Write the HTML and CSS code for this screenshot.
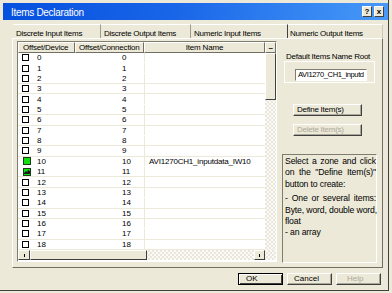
FILE: index.html
```html
<!DOCTYPE html>
<html>
<head>
<meta charset="utf-8">
<link rel="stylesheet" href="styles.css">
</head>
<body>
<div class="dialog">
  <div class="titlebar">
    <span class="title">Items Declaration</span>
    <div class="tbtns"><span class="tbtn">?</span><span class="tbtn">x</span></div>
  </div>
  <div class="tabs">
    <span class="tab t1">Discrete Input Items</span>
    <span class="tab t2">Discrete Output Items</span>
    <span class="tab t3">Numeric Input Items</span>
    <span class="tab t4 active">Numeric Output Items</span>
  </div>
  <div class="panel">
    <div class="grid">
      <div class="ghead">
        <div class="hc c1">Offset/Device</div>
        <div class="hc c2">Offset/Connection</div>
        <div class="hc c3">Item Name</div>
        <div class="hc up">–</div>
      </div>
      <div class="gbody">
        <div class="rows">
          <div class="row"><div class="cell d"><span class="cb"></span><span>0</span></div><div class="cell n">0</div><div class="cell nm"></div></div>
          <div class="row"><div class="cell d"><span class="cb"></span><span>1</span></div><div class="cell n">1</div><div class="cell nm"></div></div>
          <div class="row"><div class="cell d"><span class="cb"></span><span>2</span></div><div class="cell n">2</div><div class="cell nm"></div></div>
          <div class="row"><div class="cell d"><span class="cb"></span><span>3</span></div><div class="cell n">3</div><div class="cell nm"></div></div>
          <div class="row"><div class="cell d"><span class="cb"></span><span>4</span></div><div class="cell n">4</div><div class="cell nm"></div></div>
          <div class="row"><div class="cell d"><span class="cb"></span><span>5</span></div><div class="cell n">5</div><div class="cell nm"></div></div>
          <div class="row"><div class="cell d"><span class="cb"></span><span>6</span></div><div class="cell n">6</div><div class="cell nm"></div></div>
          <div class="row"><div class="cell d"><span class="cb"></span><span>7</span></div><div class="cell n">7</div><div class="cell nm"></div></div>
          <div class="row"><div class="cell d"><span class="cb"></span><span>8</span></div><div class="cell n">8</div><div class="cell nm"></div></div>
          <div class="row"><div class="cell d"><span class="cb"></span><span>9</span></div><div class="cell n">9</div><div class="cell nm"></div></div>
          <div class="row"><div class="cell d"><span class="cb green"></span><span>10</span></div><div class="cell n">10</div><div class="cell nm">AVI1270CH1_inputdata_IW10</div></div>
          <div class="row"><div class="cell d"><span class="cb green"><svg width="8" height="8" viewBox="0 0 8 8"><path d="M1 5 L3 3 L4 4 L5 2 L7 3 L7 6 L1 6 Z" fill="#1a1a1a"/></svg></span><span>11</span></div><div class="cell n">11</div><div class="cell nm"></div></div>
          <div class="row"><div class="cell d"><span class="cb"></span><span>12</span></div><div class="cell n">12</div><div class="cell nm"></div></div>
          <div class="row"><div class="cell d"><span class="cb"></span><span>13</span></div><div class="cell n">13</div><div class="cell nm"></div></div>
          <div class="row"><div class="cell d"><span class="cb"></span><span>14</span></div><div class="cell n">14</div><div class="cell nm"></div></div>
          <div class="row"><div class="cell d"><span class="cb"></span><span>15</span></div><div class="cell n">15</div><div class="cell nm"></div></div>
          <div class="row"><div class="cell d"><span class="cb"></span><span>16</span></div><div class="cell n">16</div><div class="cell nm"></div></div>
          <div class="row"><div class="cell d"><span class="cb"></span><span>17</span></div><div class="cell n">17</div><div class="cell nm"></div></div>
          <div class="row"><div class="cell d"><span class="cb"></span><span>18</span></div><div class="cell n">18</div><div class="cell nm"></div></div>
        </div>
        <div class="vscroll"><div class="vthumb"></div></div>
      </div>
      <div class="hscroll">
        <div class="sbtn lbtn"><span class="tick"></span></div>
        <div class="hthumb"></div>
        <div class="track"></div>
        <div class="sbtn rbtn"><span class="tick"></span></div>
        <div class="corner"></div>
      </div>
    </div>
    <div class="side">
      <div class="lbl">Default Items Name Root</div>
      <div class="frame">
        <div class="input">AVI1270_CH1_inputd</div>
      </div>
      <div class="btn define">Define Item(s)</div>
      <div class="btn delete">Delete Item(s)</div>
      <div class="info">
        <div class="jl">Select a zone and click</div>
        <div class="jl">on the "Define Item(s)"</div>
        <div class="ln">button to create:</div>
        <div class="jl gap">- One or several items:</div>
        <div class="jl">Byte, word, double word,</div>
        <div class="ln">float</div>
        <div class="ln">- an array</div>
      </div>
    </div>
  </div>
  <div class="footer">
    <div class="fbtn ok">OK</div>
    <div class="fbtn cancel">Cancel</div>
    <div class="fbtn help">Help</div>
  </div>
</div>
</body>
</html>
```

FILE: styles.css
```css
* { box-sizing: border-box; }
html, body { margin: 0; padding: 0; }
body {
  width: 392px;
  height: 293px;
  overflow: hidden;
  background: #ece9d8;
  font-family: "Liberation Sans", Arial, sans-serif;
  font-size: 8px;
  color: #000;
}
.dialog {
  width: 389px;
  height: 291px;
  border-right: 1px solid #404040;
  border-bottom: 1px solid #404040;
  padding: 3px 0 0 3px;
  display: flex;
  flex-direction: column;
}
.titlebar {
  height: 17px;
  flex: none;
  background: linear-gradient(to right, #0550de 0%, #1a66e8 45%, #3a8cf4 85%, #4a98f7 100%);
  display: flex;
  align-items: center;
  justify-content: space-between;
  padding: 0 4px 0 8px;
  color: #fff;
}
.title {
  font-size: 10px;
  letter-spacing: -0.3px;
  padding-top: 1px;
}
.tbtns { display: flex; gap: 2px; }
.tbtn {
  width: 10px;
  height: 11px;
  background: #ece9d8;
  border: 1px solid;
  border-color: #fff #404040 #404040 #fff;
  color: #000;
  font-size: 8px;
  line-height: 9px;
  text-align: center;
  font-weight: bold;
}
.tabs {
  display: flex;
  height: 14px;
  margin-top: 4px;
  padding-left: 10px;
  flex: none;
}
.tab {
  border-top: 1px solid #fff;
  padding: 4px 0 0 3px;
  line-height: 9px;
  letter-spacing: -0.25px;
  white-space: nowrap;
  border-right: 1px solid #9d9b8d;
}
.t1 { width: 88px; }
.t2 { width: 90px; }
.t3 { width: 96px; border-right: none; }
.t4 { width: 96px; border-left: 1px solid #404040; border-right: 1px solid #ccc9b8; padding-left: 2px; }
.panel {
  margin-left: 9px;
  width: 371px;
  height: 230px;
  flex: none;
  border: 1px solid;
  border-color: #fff #716f64 #716f64 #fff;
  display: flex;
  padding: 2px 0 0 4px;
}
.grid {
  width: 260px;
  height: 221px;
  border: 1px solid;
  border-color: #7f7d70 #fff #fff #7f7d70;
  display: flex;
  flex-direction: column;
  background: #fff;
}
.ghead {
  display: flex;
  height: 11px;
  flex: none;
  background: #ece9d8;
}
.hc {
  border: 1px solid;
  border-color: #fff #716f64 #716f64 #fff;
  line-height: 9px;
  white-space: nowrap;
  overflow: hidden;
  letter-spacing: -0.2px;
}
.hc.c1 { width: 57px; padding-left: 4px; }
.hc.c2 { width: 69px; padding-left: 3px; }
.hc.c3 { width: 121px; text-align: center; }
.hc.up { width: 11px; text-align: center; font-weight: bold; }
.gbody {
  display: flex;
  height: 197px;
  flex: none;
}
.rows {
  width: 247px;
  display: grid;
  grid-template-rows: repeat(19, 1fr);
}
.row {
  display: grid;
  grid-template-columns: 57px 69px 121px;
  border-bottom: 1px solid #ece9d8;
}
.row:nth-child(3n+2), .row:first-child { border-bottom-color: #fff; }
.cell {
  display: flex;
  align-items: center;
  white-space: nowrap;
  overflow: hidden;
}
.cell.d { padding-left: 4px; }
.cell.n { padding-left: 47px; }
.cell.nm { border-left: 1px solid #ece9d8; padding-left: 4px; letter-spacing: -0.2px; }
.cb {
  width: 7px;
  height: 7px;
  border: 1px solid #000;
  margin-right: 8px;
  flex: none;
  display: flex;
}
.cb.green {
  width: 8px;
  height: 8px;
  margin-left: 1px;
  margin-right: 6px;
  background: #10e010;
  border-color: #1a3a1a;
}
.cb svg { display: block; margin: -1px; }
.vscroll {
  width: 11px;
  background-color: #fbfaf6;
  background-image: repeating-conic-gradient(#e9e7dc 0 25%, #fbfaf6 0 50%);
  background-size: 4px 4px;
}
.vthumb {
  height: 47px;
  background: #ece9d8;
  border: 1px solid;
  border-color: #fff #404040 #404040 #fff;
}
.hscroll {
  height: 10px;
  flex: none;
  display: flex;
  background-color: #fbfaf6;
  background-image: repeating-conic-gradient(#e9e7dc 0 25%, #fbfaf6 0 50%);
  background-size: 4px 4px;
}
.sbtn {
  height: 10px;
  background: #ece9d8;
  border: 1px solid;
  border-color: #fff #404040 #404040 #fff;
  display: flex;
  align-items: center;
  justify-content: center;
}
.lbtn { width: 12px; }
.rbtn { width: 11px; }
.tick { width: 1px; height: 3px; background: #000; }
.hthumb {
  width: 117px;
  background: #ece9d8;
  border: 1px solid;
  border-color: #fff #404040 #404040 #fff;
}
.track { flex: 1; }
.corner { width: 11px; }
.side {
  margin-left: 5px;
  width: 95px;
  display: flex;
  flex-direction: column;
}
.lbl {
  margin-top: 12px;
  height: 8px;
  line-height: 8px;
  padding-left: 4px;
  letter-spacing: -0.25px;
  white-space: nowrap;
}
.frame {
  margin-left: 2px;
  width: 91px;
  height: 22px;
  border: 1px solid #fff;
  padding: 7px 0 0 10px;
}
.input {
  width: 72px;
  height: 12px;
  background: #fff;
  border: 1px solid;
  border-color: #7f7d70 #fff #fff #7f7d70;
  padding-left: 2px;
  line-height: 10px;
  white-space: nowrap;
  overflow: hidden;
  font-size: 7.6px;
  letter-spacing: -0.4px;
}
.btn {
  margin-left: 11px;
  width: 69px;
  height: 12px;
  border: 1px solid;
  border-color: #fff #404040 #404040 #fff;
  box-shadow: inset -1px -1px 0 #aca899;
  padding-left: 3px;
  line-height: 10px;
  letter-spacing: -0.25px;
  white-space: nowrap;
}
.define { margin-top: 21px; }
.delete { margin-top: 8px; color: #aca899; }
.info {
  margin-top: 18px;
  width: 95px;
  height: 109px;
  border: 1px solid;
  border-color: #7f7d70 #fff #fff #7f7d70;
  padding: 1px 0 0 2px;
  font-size: 8.7px;
  line-height: 11.4px;
  letter-spacing: -0.15px;
}
.jl { text-align: justify; text-align-last: justify; white-space: nowrap; }
.ln { white-space: nowrap; }
.gap { margin-top: 3px; }
.footer {
  display: flex;
  justify-content: flex-end;
  gap: 4px;
  padding-right: 7px;
  margin-top: 5px;
}
.fbtn {
  width: 45px;
  height: 12px;
  border: 1px solid;
  border-color: #fff #404040 #404040 #fff;
  box-shadow: inset -1px -1px 0 #aca899;
  padding-left: 6px;
  line-height: 10px;
  white-space: nowrap;
}
.ok { border-color: #000; box-shadow: inset 1px 1px 0 #fff, inset -1px -1px 0 #404040; text-align: left; padding-left: 7px; }
.help { color: #aca899; padding-left: 10px; }
```
